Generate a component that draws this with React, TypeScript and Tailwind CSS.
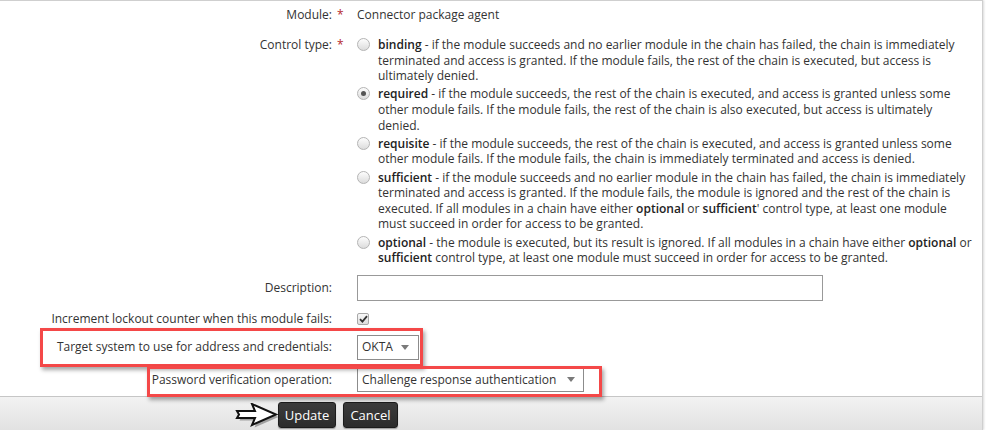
import React from "react";

const font = { fontFamily: '"Open Sans", "Liberation Sans", sans-serif' };

function Radio({ checked = false }: { checked?: boolean }) {
  return (
    <span className="mt-[1px] flex h-[13px] w-[13px] shrink-0 items-center justify-center rounded-full border border-[#b4b4b4] bg-gradient-to-b from-[#fdfdfd] to-[#dcdcdc]">
      {checked ? <span className="h-[5px] w-[5px] rounded-full bg-[#555]" /> : null}
    </span>
  );
}

function Caret() {
  return (
    <svg width="8" height="5" viewBox="0 0 8 5" aria-hidden>
      <polygon points="0,0 8,0 4,5" fill="#7a7a7a" />
    </svg>
  );
}

function Label({ children, star = false }: { children: React.ReactNode; star?: boolean }) {
  return (
    <>
      <div className="w-[332px] shrink-0 text-right text-[#333]">{children}</div>
      <div className="w-[25px] shrink-0 pl-[5px] text-[#b5262b]">{star ? "*" : ""}</div>
    </>
  );
}

const options: { name: string; checked?: boolean; body: React.ReactNode }[] = [
  {
    name: "binding",
    body: (
      <> - if the module succeeds and no earlier module in the chain has failed, the chain is immediately terminated and access is granted. If the module fails, the rest of the chain is executed, but access is ultimately denied.</>
    ),
  },
  {
    name: "required",
    checked: true,
    body: (
      <> - if the module succeeds, the rest of the chain is executed, and access is granted unless some other module fails. If the module fails, the rest of the chain is also executed, but access is ultimately denied.</>
    ),
  },
  {
    name: "requisite",
    body: (
      <> - if the module succeeds, the rest of the chain is executed, and access is granted unless some other module fails. If the module fails, the chain is immediately terminated and access is denied.</>
    ),
  },
  {
    name: "sufficient",
    body: (
      <>
        {" "}- if the module succeeds and no earlier module in the chain has failed, the chain is immediately terminated and access is granted. If the module fails, the module is ignored and the rest of the chain is executed. If all modules in a chain have either <b className="font-semibold text-[#222]">optional</b> or{" "}
        <b className="font-semibold text-[#222]">sufficient</b>' control type, at least one module must succeed in order for access to be granted.
      </>
    ),
  },
  {
    name: "optional",
    body: (
      <>
        {" "}- the module is executed, but its result is ignored. If all modules in a chain have either <b className="font-semibold text-[#222]">optional</b> or{" "}
        <b className="font-semibold text-[#222]">sufficient</b> control type, at least one module must succeed in order for access to be granted.
      </>
    ),
  },
];

export default function App() {
  return (
    <div className="relative h-[430px] w-[989px] overflow-hidden bg-white text-[12px] leading-[16px] text-[#333]" style={font}>
      <div className="flex h-full w-[983px] flex-col border-r border-t border-[#cfcfcf] shadow-[1px_0_2px_rgba(0,0,0,0.15)]">
        <div className="mt-[6px] flex">
          <Label star>Module:</Label>
          <div>Connector package agent</div>
        </div>

        <div className="mt-[14px] flex">
          <Label star>Control type:</Label>
          <div className="flex w-[619px] flex-col gap-[2.6px] leading-[15.6px]">
            {options.map((o) => (
              <div key={o.name} className="flex gap-[8px]">
                <Radio checked={o.checked} />
                <div className="flex-1">
                  <b className="font-semibold text-[#222]">{o.name}</b>
                  {o.body}
                </div>
              </div>
            ))}
          </div>
        </div>

        <div className="mt-[9px] flex items-center">
          <Label>Description:</Label>
          <div className="h-[26px] w-[466px] border border-[#999] bg-white" />
        </div>

        <div className="mt-[10px] flex items-center">
          <Label>Increment lockout counter when this module fails:</Label>
          <span className="flex h-[12px] w-[12px] items-center justify-center rounded-[2px] border border-[#a8a8a8] bg-gradient-to-b from-[#f8f8f8] to-[#dedede]">
            <svg width="9" height="8" viewBox="0 0 9 8" aria-hidden>
              <path d="M1 4.2 3.4 6.6 8 1.2" fill="none" stroke="#333" strokeWidth="1.8" />
            </svg>
          </span>
        </div>

        <div className="mt-[8px] flex items-center">
          <Label>Target system to use for address and credentials:</Label>
          <div className="flex h-[25px] w-[62px] items-center justify-between border border-[#8c8c8c] bg-white pl-[4px] pr-[9px]">
            <span>OKTA</span>
            <Caret />
          </div>
        </div>

        <div className="mt-[8px] flex items-center">
          <Label>Password verification operation:</Label>
          <div className="flex h-[24px] w-[227px] items-center justify-between border border-[#8c8c8c] bg-white pl-[4px] pr-[8px]">
            <span>Challenge response authentication</span>
            <Caret />
          </div>
        </div>

        <div className="relative mt-[4px] flex flex-1 gap-[7px] border-t border-[#c6c6c6] bg-gradient-to-b from-[#f2f2f2] to-[#e2e2e2] pl-[278px] pt-[5px]">
          <button className="h-[26px] w-[58px] rounded-[3px] border border-[#1c1c1c] bg-gradient-to-b from-[#3c3c3c] to-[#2c2c2c] text-[13px] text-white shadow-[0_1px_1px_rgba(0,0,0,0.3)]">
            Update
          </button>
          <button className="h-[26px] w-[55px] rounded-[3px] border border-[#1c1c1c] bg-gradient-to-b from-[#3c3c3c] to-[#2c2c2c] text-[13px] text-white shadow-[0_1px_1px_rgba(0,0,0,0.3)]">
            Cancel
          </button>
          <svg className="absolute left-[234px] top-[6px]" width="46" height="26" viewBox="0 0 46 26" aria-hidden>
            <polygon points="4,9 22,9 19,2 43,12.5 19,23 22,16 4,16 6,12.5" fill="rgba(0,0,0,0.3)" transform="translate(1.5,1.5)" />
            <polygon points="3,8 21,8 18,1 42,11.5 18,22 21,15 3,15 5,11.5" fill="#fff" stroke="#111" strokeWidth="2" strokeLinejoin="miter" />
          </svg>
        </div>
      </div>

      <div className="absolute left-[40px] top-[328px] h-[39px] w-[383px] border-[3px] border-[#f44848] shadow-[2px_3px_4px_rgba(0,0,0,0.35)]" />
      <div className="absolute left-[147px] top-[366px] h-[31px] w-[455px] border-[3px] border-[#f44848] shadow-[2px_3px_4px_rgba(0,0,0,0.35)]" />
    </div>
  );
}
